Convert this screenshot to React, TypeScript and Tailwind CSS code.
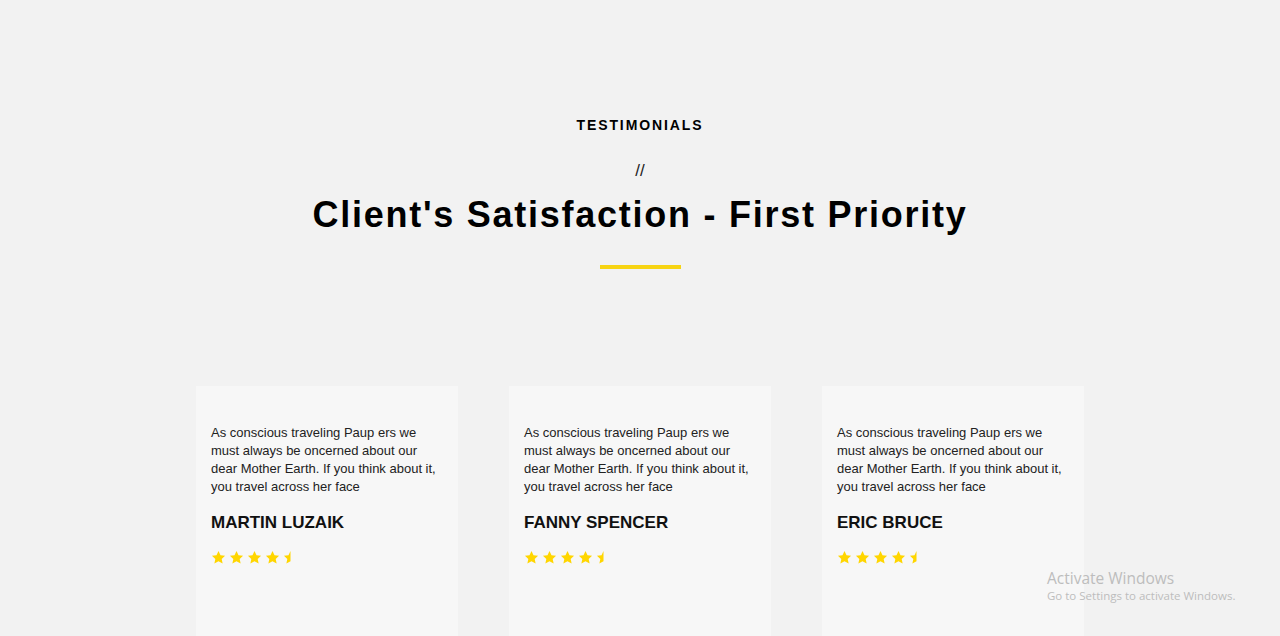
import React from 'react';

const testimonials = [
  { name: 'MARTIN LUZAIK' },
  { name: 'FANNY SPENCER' },
  { name: 'ERIC BRUCE' },
];

const quote =
  'As conscious traveling Paup ers we must always be oncerned about our dear Mother Earth. If you think about it, you travel across her face';

const Star: React.FC<{ half?: boolean }> = ({ half }) => (
  <svg width="15" height="15" viewBox="0 0 24 24" className="shrink-0">
    <defs>
      <clipPath id="half-star">
        <rect x="0" y="0" width="12" height="24" />
      </clipPath>
    </defs>
    <path
      d="M12 1.5l3.2 6.9 7.3.8-5.4 5 1.5 7.3L12 17.8l-6.6 3.7 1.5-7.3-5.4-5 7.3-.8z"
      fill="#ffd600"
      clipPath={half ? 'url(#half-star)' : undefined}
    />
  </svg>
);

export default function App() {
  return (
    <div
      className="relative h-[636px] overflow-hidden bg-[#f2f2f2] text-black"
      style={{ fontFamily: '"Liberation Sans", Arial, sans-serif' }}
    >
      <header className="flex flex-col items-center pt-[117px]">
        <p className="text-[14px] font-bold tracking-[1.9px] leading-4">TESTIMONIALS</p>
        <p className="mt-[28px] text-[17px] leading-5 text-[#222]">//</p>
        <h1 className="mt-[14px] text-[36px] font-bold tracking-[1.75px] leading-[40px]">
          Client&apos;s Satisfaction - First Priority
        </h1>
        <div className="mt-[30px] h-[4px] w-[81px] bg-[#f7d412]" />
      </header>

      <section className="mt-[117px] flex justify-center gap-[51px]">
        {testimonials.map((t) => (
          <article key={t.name} className="h-[260px] w-[262px] bg-[#f7f7f7] px-[15px] pt-[38px]">
            <p className="text-[13px] leading-[18px] text-[#222]">{quote}</p>
            <h3 className="mt-[17px] text-[17px] font-bold leading-5 text-[#111]">{t.name}</h3>
            <div className="mt-[17px] flex gap-[3px]">
              <Star />
              <Star />
              <Star />
              <Star />
              <Star half />
            </div>
          </article>
        ))}
      </section>

      <div
        className="absolute left-[1047px] top-[569px] text-[#bdbdbd]"
        style={{ fontFamily: '"Open Sans", "Noto Sans", sans-serif' }}
      >
        <p className="text-[15.5px] leading-[19px]">Activate Windows</p>
        <p className="text-[11.5px] leading-4">Go to Settings to activate Windows.</p>
      </div>
    </div>
  );
}
